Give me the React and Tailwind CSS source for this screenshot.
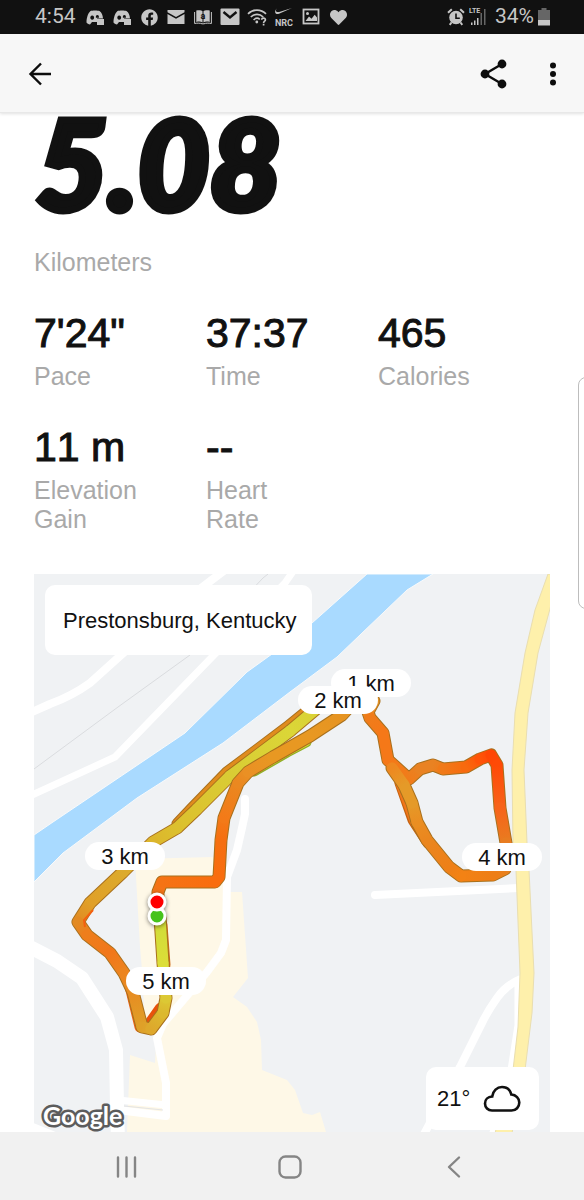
import { FaFacebook, FaHeart } from "react-icons/fa";

const stats = [
  { value: "7'24\"", label: "Pace" },
  { value: "37:37", label: "Time" },
  { value: "465", label: "Calories" },
  { value: "11 m", label: "Elevation Gain" },
  { value: "--", label: "Heart Rate" },
];

// [x, y, colour] for every point of the run, colour follows the pace
const outbound = [
  [158, 903, "#f2751a"],
  [158, 892, "#f2751a"],
  [162, 882, "#f57314"],
  [215, 882, "#f96d0e"],
  [219, 877, "#f96d0e"],
  [221, 840, "#f56f10"],
  [224, 818, "#f37a18"],
  [238, 783, "#ea8820"],
  [248, 772, "#ea9024"],
  [273, 757, "#e89822"],
  [310, 736, "#e89822"],
  [342, 715, "#e69422"],
  [352, 704, "#e69422"],
];

const inbound = [
  [322, 704, "#d9d136"],
  [290, 731, "#dbd637"],
  [230, 776, "#d9cc34"],
  [197, 809, "#dcc430"],
  [177, 828, "#dcc02e"],
  [153, 842, "#dcb62c"],
  [123, 872, "#dcaa2c"],
  [90, 903, "#e0a028"],
  [78, 922, "#e28a22"],
  [87, 935, "#ee7e1c"],
  [110, 953, "#f1771a"],
  [124, 973, "#ec841e"],
  [133, 992, "#e78c22"],
  [142, 1027, "#dfa028"],
  [151, 1029, "#dea82c"],
  [163, 1013, "#dcb82e"],
  [166, 998, "#dcc834"],
  [163, 963, "#dcde38"],
  [160, 917, "#cfdc38"],
];

const loop = [
  [374, 701, "#e39226"],
  [368, 712, "#ea8820"],
  [370, 718, "#f07c1a"],
  [383, 733, "#f57818"],
  [388, 760, "#f57818"],
  [409, 779, "#f07c1a"],
  [420, 769, "#e98222"],
  [433, 765, "#e98222"],
  [443, 769, "#f07a18"],
  [466, 767, "#f86a0e"],
  [480, 759, "#ff5408"],
  [491, 755, "#ff4604"],
  [497, 765, "#ff4a06"],
  [500, 808, "#f7641a"],
  [506, 843, "#e87c20"],
  [505, 869, "#e9801c"],
  [493, 875, "#ee7e16"],
  [461, 876, "#f38214"],
  [449, 867, "#ee8018"],
  [427, 840, "#ea861e"],
  [417, 822, "#ea8e22"],
  [412, 803, "#e59a28"],
  [404, 785, "#e59a28"],
  [392, 768, "#ee8820"],
];

function Route({ id, points }) {
  const line = points.map(([x, y]) => `${x},${y}`).join(" ");
  return (
    <g fill="none" strokeLinecap="round" strokeLinejoin="round">
      <polyline points={line} stroke="#a8701c" strokeWidth="13" />
      {points.slice(1).map(([x, y, color], i) => {
        const [px, py, pcolor] = points[i];
        return (
          <g key={i}>
            <linearGradient
              id={`${id}-${i}`}
              gradientUnits="userSpaceOnUse"
              x1={px}
              y1={py}
              x2={x}
              y2={y}
            >
              <stop offset="0" stopColor={pcolor} />
              <stop offset="1" stopColor={color} />
            </linearGradient>
            <path
              d={`M${px} ${py}L${x} ${y}`}
              stroke={`url(#${id}-${i})`}
              strokeWidth="11"
            />
          </g>
        );
      })}
    </g>
  );
}

function DiscordIcon() {
  return (
    <svg viewBox="0 0 20 20" className="size-5" fill="currentColor">
      <path
        fillRule="evenodd"
        d="M5.500 4C7 3.300 13 3.300 14.500 4C16.600 5.400 17.800 8 18 11.500H12V15H7L5 17.500C3.500 17.200 2.200 16.300 1.500 15.400C1.500 11 3 6 5.500 4ZM7.200 8.500a1.900 2.100 0 1 0 0.010 0ZM12.400 8c-1.300 0-1.700 1.200-1.500 2.700h3c0.200-1.500-0.300-2.700-1.500-2.700Z"
      />
      <path d="M12 12h7v6h-7z" />
    </svg>
  );
}

function StatusBar() {
  return (
    <div className="flex h-[34px] items-center justify-between bg-[#111111] pr-[34px] pl-[35px] font-['Roboto',sans-serif] text-[21px] text-[#c6c6c6]">
      <div className="flex items-center gap-[7px]">
        <span className="w-[43px]">4:54</span>
        <DiscordIcon />
        <DiscordIcon />
        <span className="flex w-5 justify-center">
          <FaFacebook className="size-[17px]" />
        </span>
        <svg viewBox="0 0 20 20" className="size-5" fill="currentColor">
          <path d="M1.500 3h17v2.200L10 10 1.500 5.200z" />
          <path d="M1.500 7l8.500 4.700L18.500 7v10h-17z" />
        </svg>
        <svg viewBox="0 0 20 20" className="size-5" fill="currentColor">
          <path d="M3.300 3.500C6 2.900 8.500 3.200 9.500 4.200v11.300C8 14.500 6 14.300 3.300 15zM16.700 3.500C14 2.900 11.500 3.200 10.500 4.200v11.300c1.500-1 3.500-1.200 6.200-.5z" />
          <path
            d="M1.600 5v11.500c3-.6 5.700-.4 7.400.3h2c1.700-.7 4.400-.9 7.400-.3V5"
            fill="none"
            stroke="currentColor"
            strokeWidth="1"
          />
          <text
            x="10"
            y="12"
            textAnchor="middle"
            fontSize="9"
            fontWeight="700"
            fill="#111111"
          >
            a
          </text>
        </svg>
        <svg viewBox="0 0 20 20" className="size-5">
          <rect x="0.500" y="1.500" width="19" height="16.500" rx="1" fill="currentColor" />
          <path d="M3.500 5l6.500 5.500L16.500 5" fill="none" stroke="#111111" strokeWidth="2.400" />
        </svg>
        <svg viewBox="0 0 20 20" className="size-5" fill="none" stroke="currentColor" strokeWidth="1.700">
          <path d="M1 6.800c5-5 13-5 18 0M3.800 10c3.600-3.600 8.800-3.600 12.400 0M6.600 13c2-2 4.600-2 6.200-.6" />
          <circle cx="9.800" cy="15" r="1.400" fill="currentColor" stroke="none" />
          <path d="M14.600 12.800c.2-2.400 4-2 3.800.2-.1 1.200-1.800 1.300-1.800 2.900M16.600 16.800v1.600" />
        </svg>
        <svg viewBox="0 0 20 20" className="size-5 overflow-visible" fill="currentColor">
          <path d="M3 1.200C1 3.600 2 5.700 5.200 4.900L18 1 5 6.700C1 8-.2 4.600 3 1.200z" />
          <text
            x="10"
            y="18.500"
            textAnchor="middle"
            fontFamily="Roboto, sans-serif"
            fontSize="9"
            fontWeight="700"
          >
            NRC
          </text>
        </svg>
        <svg viewBox="0 0 20 20" className="size-5">
          <rect x="2.500" y="2.500" width="15" height="14" fill="none" stroke="currentColor" strokeWidth="1.800" />
          <path d="M4.500 14l3.500-4.500 2.500 2.300 3.200-4 2.300 2.700V14z" fill="currentColor" />
          <circle cx="6.500" cy="6.500" r="1.500" fill="currentColor" />
        </svg>
        <span className="flex w-5 justify-center">
          <FaHeart className="size-[17px]" />
        </span>
      </div>
      <div className="flex items-center">
        <svg viewBox="0 0 18 18" className="size-[18px]" fill="none" stroke="currentColor">
          <circle cx="9" cy="9.500" r="6.800" fill="currentColor" stroke="none" />
          <path d="M1 4.800L4.800 1.200M17 4.800L13.200 1.200" strokeWidth="2" />
          <path d="M4.500 14.500l-1.800 2.300M13.500 14.500l1.800 2.300" strokeWidth="2" />
          <path d="M9 5.500v4.700h3.800" stroke="#111111" strokeWidth="1.600" />
        </svg>
        <svg viewBox="0 0 18 20" className="ml-1 h-5 w-[18px]" fill="currentColor">
          <text x="0" y="6" fontSize="7" fontWeight="700">
            LTE
          </text>
          <path d="M2 15.500h1.500V18H2zM5 13.500h1.500V18H5zM8 11h1.500v7H8z" />
          <path d="M11.500 6H13v12h-1.500zM15 2h1.500v16H15z" fill="#666666" />
        </svg>
        <span className="ml-2">34%</span>
        <svg viewBox="0 0 12 18" className="ml-1 h-[18px] w-3">
          <path d="M3.500 0h5v2H12v10H0V2h3.500z" fill="#666666" />
          <path d="M0 12h12v5.500H0z" fill="currentColor" />
        </svg>
      </div>
    </div>
  );
}

function AppBar() {
  return (
    <header className="relative z-10 flex h-[79px] items-center border-b border-[#e8e8e8] bg-[#f7f7f7] px-7 pt-px text-[#0d0d0d] shadow-[0_1px_3px_rgba(0,0,0,0.12)]">
      <button aria-label="Back">
        <svg viewBox="0 0 24 24" className="size-6" fill="none" stroke="currentColor" strokeWidth="2.400">
          <path d="M13 1.500L2.500 12 13 22.500M2.500 12H23" />
        </svg>
      </button>
      <button aria-label="Share" className="ml-auto">
        <svg viewBox="0 0 28 30" className="h-[30px] w-7" fill="currentColor">
          <path d="M22 5L5 15l17 10" fill="none" stroke="currentColor" strokeWidth="2.400" />
          <circle cx="22" cy="5" r="4.400" />
          <circle cx="5" cy="15" r="4.400" />
          <circle cx="22" cy="25" r="4.400" />
        </svg>
      </button>
      <button aria-label="More options" className="ml-[42px]">
        <svg viewBox="0 0 6 24" className="h-6 w-1.5" fill="currentColor">
          <circle cx="3" cy="3.400" r="3" />
          <circle cx="3" cy="12" r="3" />
          <circle cx="3" cy="20.600" r="3" />
        </svg>
      </button>
    </header>
  );
}

function KmLabel({ className, children }) {
  return (
    <span
      className={`absolute flex h-7 w-20 items-center justify-center rounded-full bg-white text-[22px] ${className}`}
    >
      {children}
    </span>
  );
}

function RouteMap() {
  return (
    <section className="relative mt-10 h-[558px] overflow-hidden bg-[#f0f2f4]">
      <svg
        viewBox="34 574 516 558"
        preserveAspectRatio="xMidYMid slice"
        className="block h-full w-full"
        aria-label="Map of the run"
      >
        <path
          d="M34 835L53 822 185 733 247 672 272 654 312 623 367 574H433L407 590 337 657 290 692 223 743 137 798 63 853 34 882Z"
          fill="#a9daff"
          stroke="#f8fafb"
          strokeWidth="1"
        />
        <path
          d="M135 859L175 858 213 857 230 892H242L248 978 233 997 247 1007 257 1022 261 1040 262 1070 287 1080 295 1090 303 1113 312 1115 320 1112 326 1132H127L130 1055 155 1063 157 1030 145 1023 142 970 140 947Z"
          fill="#fef8e7"
        />
        <path d="M34 769L118 707 190 655 263 578 268 574" fill="none" stroke="#dadcdf" strokeWidth="1" />
        {/* side streets */}
        <g fill="none" stroke="#ffffff" strokeLinejoin="round" strokeWidth="8">
          <path d="M30 713L50 704 Q72 696 90 683L120 656 170 612 213 579 225 570" />
          <path d="M30 796L115 757 213 656 285 583 294 570" strokeWidth="7" />
          <path d="M245 799L245 814 242 828 237 850 227 877 226 940 221 953 207 972 163 1024 157 1038 160 1053 166 1083 166 1116 118 1110" strokeLinecap="round" />
          <path d="M118 1100L166 1105" strokeWidth="7" />
          <path d="M30 947L57 961 82 978 107 1017 116 1050 117 1107 118 1140" strokeWidth="14" />
          <path d="M30 1126L55 1136" />
          <path d="M375 895L519 888" strokeLinecap="round" />
          <path d="M521 979Q506 985 497 998 487 1012 481 1025L460 1067 423 1136" />
          <path d="M518 980L518 1025 511 1070 492 1136" strokeWidth="7" />
        </g>
        <path d="M124 1106L163 1110" stroke="#e4e4e4" strokeWidth="1" />
        <path
          d="M548 574L535 610 525 653 515 713 512 770 513 843 516 870 520 973 518 1027 513 1070 495 1133H512L525 1070 532 1013 534 973 529 870 527 843 524 770 528 713 538 653 551 605V574Z"
          fill="#fef0ab"
          stroke="#e9deb0"
          strokeWidth="1"
        />
        {/* earlier lap, just visible under the main line */}
        <g fill="none" strokeLinecap="round" strokeLinejoin="round">
          <path d="M319 702L287 728 227 773 193 808 178 824" stroke="#a8701c" strokeWidth="13" />
          <path d="M319 702L287 728 227 773 193 808 178 824" stroke="#e08c1e" strokeWidth="11" />
          <path d="M306 742L287 752 254 771" stroke="#8fae26" strokeWidth="11" />
          <path d="M306 741L287 751 254 770" stroke="#dede36" strokeWidth="10" />
          <path d="M400 783L413 820 428 843" stroke="#c4620f" strokeWidth="11" />
          <path d="M400 782L414 820 428 842" stroke="#f2761a" strokeWidth="10" />
          <path d="M128 978L140 1027" stroke="#f26414" strokeWidth="11" />
          <path d="M149 1026L161 1009" stroke="#e8520c" strokeWidth="13" />
          <path d="M161 925L164 965" stroke="#cf6a18" strokeWidth="13" />
        </g>
        <Route id="in" points={inbound} />
        <Route id="out" points={outbound} />
        <Route id="loop" points={loop} />
        <path d="M93 910L84 920 85 927" fill="none" stroke="#f4600f" strokeWidth="2" />
        <g stroke="#ffffff" strokeWidth="3" className="drop-shadow-[0_1px_2px_rgba(0,0,0,0.5)]">
          <circle cx="157" cy="916" r="8" fill="#46c31c" />
          <circle cx="157" cy="902" r="8" fill="#ff0000" />
        </g>
        <text
          x="43"
          y="1125"
          fontFamily="Lato, sans-serif"
          fontSize="25"
          fontWeight="700"
          fill="#ffffff"
          stroke="#5c5c5c"
          strokeWidth="5"
          strokeLinejoin="round"
          paintOrder="stroke"
        >
          Google
        </text>
      </svg>
      <KmLabel className="top-[95px] left-[297px]">1 km</KmLabel>
      <KmLabel className="top-[112px] left-[264px]">2 km</KmLabel>
      <KmLabel className="top-[268px] left-[51px]">3 km</KmLabel>
      <KmLabel className="top-[269px] left-[428px]">4 km</KmLabel>
      <KmLabel className="top-[393px] left-[92px]">5 km</KmLabel>
      <div className="absolute top-[11px] left-[11px] flex h-[70px] items-center rounded-[10px] bg-white pr-[15px] pl-[18px] text-[22px]">
        Prestonsburg, Kentucky
      </div>
      <div className="absolute right-[11px] bottom-0.5 flex h-[63px] w-[113px] items-center justify-between rounded-[10px] bg-white pr-[18px] pl-[11px] text-[22px]">
        21°
        <svg viewBox="0 0 38 28" className="h-7 w-[38px]" fill="none" stroke="currentColor" strokeWidth="2.600">
          <path d="M9 25.500C5 25.500 2 22.500 2 18.500c0-3.800 2.800-6.800 7.200-7C10 6 14 2 19 2c4.600 0 8.200 3 9.300 7.500 4.700.3 8 3.800 8 8 0 4.600-3.300 8-7.800 8z" />
        </svg>
      </div>
    </section>
  );
}

function NavBar() {
  return (
    <nav className="mt-auto grid h-[68px] grid-cols-3 items-center justify-items-center bg-[#f1f1f1] pt-0.5 pr-12 pl-11 text-[#858585]">
      <button aria-label="Recent apps">
        <svg viewBox="0 0 24 24" className="size-6" fill="none" stroke="currentColor" strokeWidth="2.400" strokeLinecap="round">
          <path d="M4 2.500v19M12.500 2.500v19M21 2.500v19" />
        </svg>
      </button>
      <button aria-label="Home">
        <svg viewBox="0 0 24 24" className="size-6" fill="none" stroke="currentColor" strokeWidth="2.400">
          <rect x="1.500" y="1.500" width="21" height="21" rx="6" />
        </svg>
      </button>
      <button aria-label="Go back">
        <svg viewBox="0 0 24 24" className="size-6" fill="none" stroke="currentColor" strokeWidth="2.400" strokeLinecap="round" strokeLinejoin="round">
          <path d="M17 2.500L7 12l10 9.500" />
        </svg>
      </button>
    </nav>
  );
}

export default function App() {
  return (
    <div className="relative flex min-h-screen flex-col overflow-hidden bg-white font-['Liberation_Sans',Arial,sans-serif] text-[#111111]">
      <StatusBar />
      <AppBar />
      <main className="px-[34px]">
        <h1 className="pl-0.5 font-['Lato',sans-serif] text-[124px] leading-[98px] font-black italic [-webkit-text-stroke:7px_#111111]">
          5.08
        </h1>
        <p className="mt-[37px] text-[25px] leading-[29px] text-[#a9a9a9]">
          Kilometers
        </p>
        <dl className="mt-8 grid grid-cols-3 gap-y-8">
          {stats.map((stat) => (
            <div key={stat.label} className="flex flex-col-reverse justify-end gap-[5px]">
              <dt className="max-w-[120px] text-[25px] leading-[29px] text-[#a9a9a9]">
                {stat.label}
              </dt>
              <dd className="text-[41px] leading-[48px] [font-kerning:none] [-webkit-text-stroke:1px_#111111]">
                {stat.value}
              </dd>
            </div>
          ))}
        </dl>
        <RouteMap />
      </main>
      <NavBar />
      {/* edge panel handle */}
      <div className="absolute top-[377px] -right-3 h-[232px] w-[18px] rounded-[8px] border border-[#bdbdbd] bg-white" />
    </div>
  );
}
